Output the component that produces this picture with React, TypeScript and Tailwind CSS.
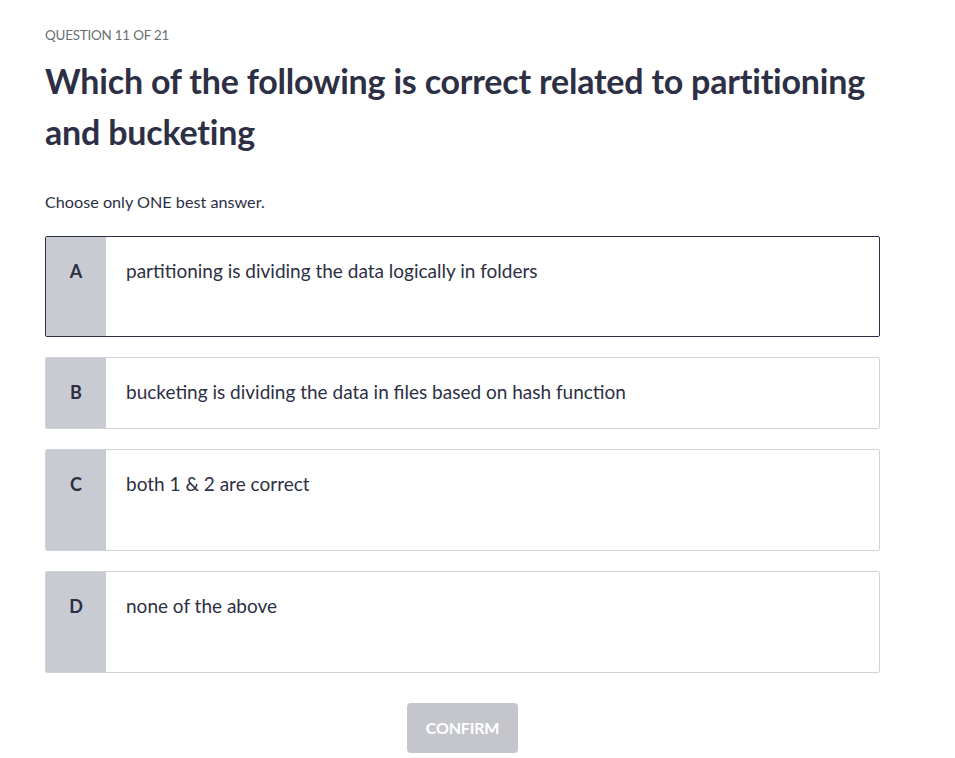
const options = [
  { key: 'A', text: 'partitioning is dividing the data logically in folders', selected: true, h: 'h-[101px]' },
  { key: 'B', text: 'bucketing is dividing the data in files based on hash function', selected: false, h: 'h-[72px]' },
  { key: 'C', text: 'both 1 & 2 are correct', selected: false, h: 'h-[102px]' },
  { key: 'D', text: 'none of the above', selected: false, h: 'h-[102px]' },
];

export default function App() {
  return (
    <div className="min-h-screen bg-white text-[#2d2f44] font-['Lato','Noto_Sans',sans-serif]">
      <div className="pl-[45px] pr-[75px] pt-[26px]">
        <p className="text-[13.4px] leading-[18px] text-[#6a6f73] tracking-[-0.2px]">QUESTION 11 OF 21</p>
        <h1 className="mt-[11px] text-[34px] leading-[51px] font-bold tracking-[-0.2px] max-w-[835px]">
          Which of the following is correct related to partitioning and bucketing
        </h1>
        <p className="mt-[34px] text-[16.2px] leading-[22px]">Choose only ONE best answer.</p>

        <div className="mt-[23px] flex flex-col gap-[20px]">
          {options.map((o) => (
            <div
              key={o.key}
              className={`flex ${o.h} rounded-[2px] border overflow-hidden ${
                o.selected ? 'border-[#2d2f44]' : 'border-[#d1d3da]'
              }`}
            >
              <div className="w-[60px] shrink-0 bg-[#c9cbd3] flex justify-center pt-[22px]">
                <span className="text-[18px] leading-[24px] font-bold">{o.key}</span>
              </div>
              <div className="flex-1 pl-[20px] pt-[22px] text-[19px] leading-[24px]">{o.text}</div>
            </div>
          ))}
        </div>

        <div className="mt-[30px] flex justify-center">
          <button className="w-[111px] h-[50px] rounded-[4px] bg-[#c4c6cc] text-white text-[16px] font-bold tracking-[-0.2px]">
            CONFIRM
          </button>
        </div>
      </div>
    </div>
  );
}
